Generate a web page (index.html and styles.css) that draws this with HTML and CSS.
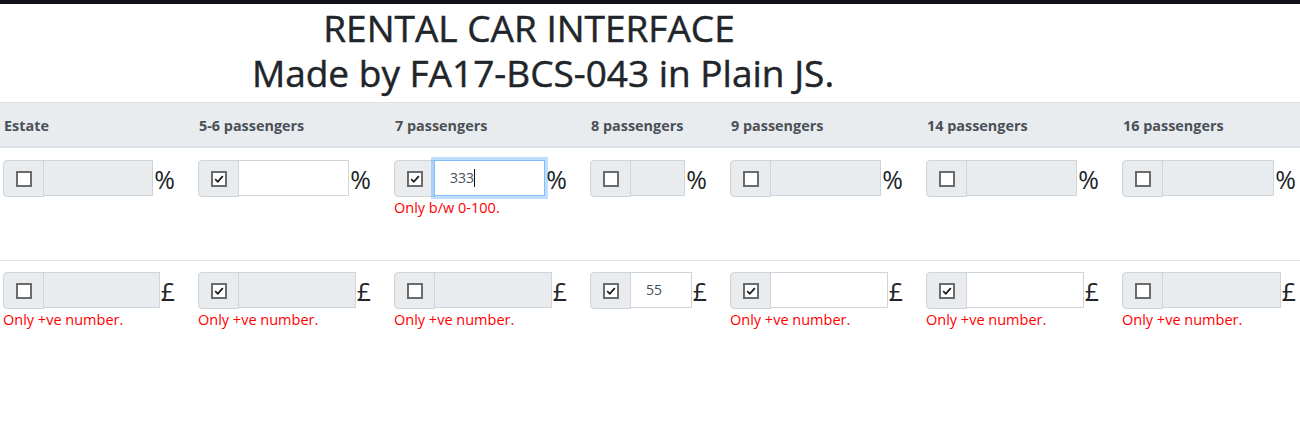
FILE: index.html
```html
<!DOCTYPE html>
<html>
<head>
<meta charset="utf-8">
<title>Rental Car Interface</title>
<link rel="stylesheet" href="styles.css">
</head>
<body>
<div class="topbar"></div>
<h1 class="title"><span class="line1">RENTAL CAR INTERFACE</span><span class="line2">Made by FA17-BCS-043 in Plain JS.</span></h1>
<table class="rates">
  <colgroup>
    <col class="c-wide"><col class="c-wide"><col class="c-wide"><col class="c-narrow"><col class="c-wide"><col class="c-wide"><col class="c-last">
  </colgroup>
  <thead>
    <tr><th>Estate</th><th>5-6 passengers</th><th>7 passengers</th><th>8 passengers</th><th>9 passengers</th><th>14 passengers</th><th class="last">16 passengers</th></tr>
  </thead>
  <tbody>
    <tr class="row-pct">
      <td><div class="cell"><div class="group"><span class="pre"><svg class="cb" width="16" height="16" viewBox="0 0 16 16"><rect x="1" y="1" width="14" height="14" fill="#fff" stroke="#6b6b6b" stroke-width="2"/></svg></span><div class="field off"></div><span class="sym pct">%</span></div></div></td>
      <td><div class="cell"><div class="group"><span class="pre"><svg class="cb" width="16" height="16" viewBox="0 0 16 16"><rect x="1" y="1" width="14" height="14" fill="#fff" stroke="#6b6b6b" stroke-width="2"/><path d="M4.2 8.2 L6.8 10.8 L11.8 5.2" fill="none" stroke="#1a1a1a" stroke-width="1.8"/></svg></span><div class="field"></div><span class="sym pct">%</span></div></div></td>
      <td><div class="cell"><div class="group"><span class="pre"><svg class="cb" width="16" height="16" viewBox="0 0 16 16"><rect x="1" y="1" width="14" height="14" fill="#fff" stroke="#6b6b6b" stroke-width="2"/><path d="M4.2 8.2 L6.8 10.8 L11.8 5.2" fill="none" stroke="#1a1a1a" stroke-width="1.8"/></svg></span><div class="field focus">333<span class="caret"></span></div><span class="sym pct">%</span></div><div class="err">Only b/w 0-100.</div></div></td>
      <td><div class="cell"><div class="group"><span class="pre"><svg class="cb" width="16" height="16" viewBox="0 0 16 16"><rect x="1" y="1" width="14" height="14" fill="#fff" stroke="#6b6b6b" stroke-width="2"/></svg></span><div class="field off"></div><span class="sym pct">%</span></div></div></td>
      <td><div class="cell"><div class="group"><span class="pre"><svg class="cb" width="16" height="16" viewBox="0 0 16 16"><rect x="1" y="1" width="14" height="14" fill="#fff" stroke="#6b6b6b" stroke-width="2"/></svg></span><div class="field off"></div><span class="sym pct">%</span></div></div></td>
      <td><div class="cell"><div class="group"><span class="pre"><svg class="cb" width="16" height="16" viewBox="0 0 16 16"><rect x="1" y="1" width="14" height="14" fill="#fff" stroke="#6b6b6b" stroke-width="2"/></svg></span><div class="field off"></div><span class="sym pct">%</span></div></div></td>
      <td class="last"><div class="cell"><div class="group"><span class="pre"><svg class="cb" width="16" height="16" viewBox="0 0 16 16"><rect x="1" y="1" width="14" height="14" fill="#fff" stroke="#6b6b6b" stroke-width="2"/></svg></span><div class="field off"></div><span class="sym pct">%</span></div></div></td>
    </tr>
    <tr class="row-gbp">
      <td><div class="group"><span class="pre"><svg class="cb" width="16" height="16" viewBox="0 0 16 16"><rect x="1" y="1" width="14" height="14" fill="#fff" stroke="#6b6b6b" stroke-width="2"/></svg></span><div class="field off"></div><span class="sym gbp">£</span></div><div class="err">Only +ve number.</div></td>
      <td><div class="group"><span class="pre"><svg class="cb" width="16" height="16" viewBox="0 0 16 16"><rect x="1" y="1" width="14" height="14" fill="#fff" stroke="#6b6b6b" stroke-width="2"/><path d="M4.2 8.2 L6.8 10.8 L11.8 5.2" fill="none" stroke="#1a1a1a" stroke-width="1.8"/></svg></span><div class="field off"></div><span class="sym gbp">£</span></div><div class="err">Only +ve number.</div></td>
      <td><div class="group"><span class="pre"><svg class="cb" width="16" height="16" viewBox="0 0 16 16"><rect x="1" y="1" width="14" height="14" fill="#fff" stroke="#6b6b6b" stroke-width="2"/></svg></span><div class="field off"></div><span class="sym gbp">£</span></div><div class="err">Only +ve number.</div></td>
      <td><div class="group"><span class="pre"><svg class="cb" width="16" height="16" viewBox="0 0 16 16"><rect x="1" y="1" width="14" height="14" fill="#fff" stroke="#6b6b6b" stroke-width="2"/><path d="M4.2 8.2 L6.8 10.8 L11.8 5.2" fill="none" stroke="#1a1a1a" stroke-width="1.8"/></svg></span><div class="field">55</div><span class="sym gbp">£</span></div></td>
      <td><div class="group"><span class="pre"><svg class="cb" width="16" height="16" viewBox="0 0 16 16"><rect x="1" y="1" width="14" height="14" fill="#fff" stroke="#6b6b6b" stroke-width="2"/><path d="M4.2 8.2 L6.8 10.8 L11.8 5.2" fill="none" stroke="#1a1a1a" stroke-width="1.8"/></svg></span><div class="field"></div><span class="sym gbp">£</span></div><div class="err">Only +ve number.</div></td>
      <td><div class="group"><span class="pre"><svg class="cb" width="16" height="16" viewBox="0 0 16 16"><rect x="1" y="1" width="14" height="14" fill="#fff" stroke="#6b6b6b" stroke-width="2"/><path d="M4.2 8.2 L6.8 10.8 L11.8 5.2" fill="none" stroke="#1a1a1a" stroke-width="1.8"/></svg></span><div class="field"></div><span class="sym gbp">£</span></div><div class="err">Only +ve number.</div></td>
      <td class="last"><div class="group"><span class="pre"><svg class="cb" width="16" height="16" viewBox="0 0 16 16"><rect x="1" y="1" width="14" height="14" fill="#fff" stroke="#6b6b6b" stroke-width="2"/></svg></span><div class="field off"></div><span class="sym gbp">£</span></div><div class="err">Only +ve number.</div></td>
    </tr>
  </tbody>
</table>
</body>
</html>
```
FILE: styles.css
```css
html, body {
  margin: 0;
  padding: 0;
  background: #fff;
  overflow: hidden;
}
body {
  font-family: "Open Sans", "Liberation Sans", sans-serif;
  color: #212529;
}
.topbar {
  height: 4px;
  background: #121018;
}
.title {
  width: 1086px;
  margin: 1px 0 0 0;
  text-align: center;
  font-size: 37px;
  font-weight: 400;
  line-height: 45px;
  color: #212529;
  -webkit-text-stroke: 0.45px #212529;
}
.title span {
  display: block;
}
.title .line1 {
  padding-right: 28px;
}
.rates {
  margin-top: 7px;
  width: 1300px;
  table-layout: fixed;
  border-collapse: collapse;
}
.c-wide { width: 196px; }
.c-narrow { width: 140px; }
.c-last { width: 181px; }
.rates col:first-child { width: 195px; }
.rates th {
  background: #e9ecef;
  color: #495057;
  font-size: 14.4px;
  font-weight: 700;
  line-height: 24px;
  text-align: left;
  padding: 11px 20px 8px 4px;
  border-top: 1px solid #dee2e6;
  border-bottom: 2px solid #dee2e6;
  white-space: nowrap;
}
.rates td {
  vertical-align: top;
  padding: 12px 20px 0 3px;
}
.rates th.last { padding-right: 4px; }
.rates td.last { padding-right: 4px; }
.row-pct .cell {
  height: 100px;
}
.row-gbp td {
  border-top: 1px solid #dee2e6;
  padding-top: 11px;
}
.group {
  display: flex;
  align-items: center;
}
.pre {
  flex: 0 0 41px;
  height: 37px;
  box-sizing: border-box;
  background: #e9ecef;
  border: 1px solid #ced4da;
  border-radius: 4px 0 0 4px;
  display: flex;
  align-items: center;
  justify-content: center;
  align-self: flex-start;
}
.cb { display: block; }
.field {
  flex: 1 1 auto;
  min-width: 0;
  height: 36px;
  box-sizing: border-box;
  align-self: flex-start;
  margin-left: -1px;
  border: 1px solid #ced4da;
  background: #fff;
  padding-left: 15px;
  font-size: 14px;
  line-height: 34px;
  color: #495057;
  display: flex;
  align-items: center;
}
.field.off {
  background: #e9ecef;
}
.field.focus {
  border-color: #80bdff;
  box-shadow: 0 0 0 3px rgba(0, 123, 255, 0.25);
  position: relative;
  z-index: 1;
}
.caret {
  display: inline-block;
  width: 1px;
  height: 18px;
  background: #111;
}
.sym {
  font-size: 25px;
  line-height: 30px;
  color: #212529;
  padding-left: 1px;
  box-sizing: border-box;
}
.sym.pct { flex: 0 0 21px; }
.sym.gbp { flex: 0 0 14px; }
.err {
  color: #ff0000;
  font-size: 14.5px;
  line-height: 21px;
  white-space: nowrap;
}
```
